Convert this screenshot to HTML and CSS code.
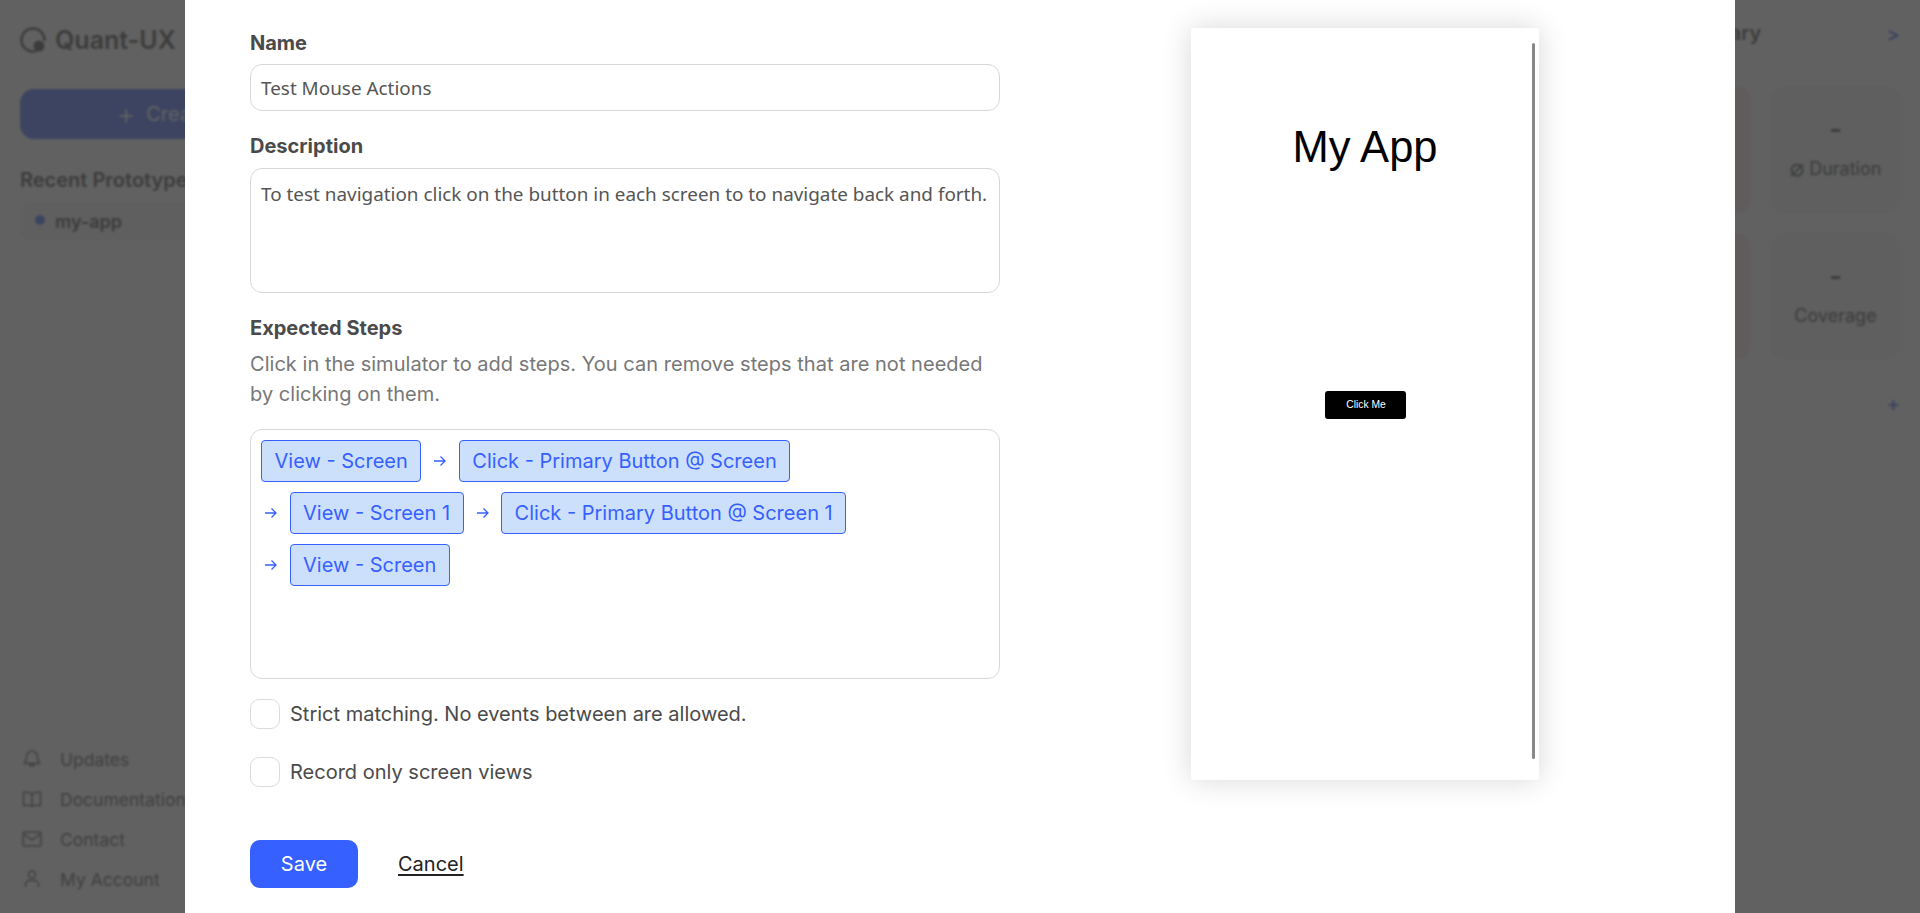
FILE: index.html
```html
<!DOCTYPE html>
<html lang="en">
<head>
<meta charset="utf-8">
<title>Quant-UX</title>
<link rel="stylesheet" href="styles.css">
</head>
<body>
<div class="page">
  <aside class="sidebar">
    <div class="logo">
      <svg class="logo-icon" viewBox="0 0 26 26"><path d="M16.500 23.900A11.500 11.500 0 1 1 24.400 14" fill="none" stroke="currentColor" stroke-width="2.500"/><circle cx="19" cy="19" r="5.500" fill="currentColor"/></svg>
      <span>Quant-UX</span>
    </div>
    <button class="create"><span class="create-plus">+</span>Create Prototype</button>
    <h3 class="recent">Recent Prototypes</h3>
    <div class="proto"><i class="proto-dot"></i>my-app</div>
    <nav class="nav">
      <a class="nav-row"><svg viewBox="0 0 20 20"><path d="M10 2a5.500 5.500 0 0 0-5.500 5.500c0 4-1.500 5.500-2 7h15c-.5-1.500-2-3-2-7A5.500 5.500 0 0 0 10 2zM7.500 14.500a2.500 2.500 0 0 0 5 0"/></svg>Updates</a>
      <a class="nav-row"><svg viewBox="0 0 20 20"><path d="M10 5.500C8.500 3.500 5 3 1.500 3.500v13c3.500-.5 7-.5 8.500 1 1.500-1.500 5-1.500 8.500-1v-13C15 3 11.500 3.500 10 5.500zM10 5.500v12"/></svg>Documentation</a>
      <a class="nav-row"><svg viewBox="0 0 20 20"><rect x="1" y="3" width="18" height="14" rx="1.500"/><path d="M2 5l8 6 8-6"/></svg>Contact</a>
      <a class="nav-row"><svg viewBox="0 0 20 20"><circle cx="10" cy="5.500" r="3.500"/><path d="M3.500 18v-2.500a4 4 0 0 1 4-4h5a4 4 0 0 1 4 4V18"/></svg>My Account</a>
    </nav>
  </aside>
  <main class="summary">
    <div class="summary-head"><h3 class="summary-title">Test Summary</h3><span class="link-mark">&gt;</span></div>
    <div class="cards">
      <div class="card card-red"><b>-</b></div>
      <div class="card"><b>-</b><span><em class="avg">⌀</em> Duration</span></div>
      <div class="card card-red"><b>-</b></div>
      <div class="card"><b>-</b><span>Coverage</span></div>
    </div>
    <div class="summary-foot"><span class="link-mark">+</span></div>
  </main>
</div>

<div class="overlay">
  <section class="modal">
    <form class="form">
      <label class="label">Name</label>
      <div class="field field-input">Test Mouse Actions</div>
      <label class="label label-desc">Description</label>
      <div class="field field-area">To test navigation click on the button in each screen to to navigate back and forth.</div>
      <label class="label label-steps">Expected Steps</label>
      <p class="help">Click in the simulator to add steps. You can remove steps that are not needed by clicking on them.</p>
      <div class="steps">
        <span class="step"><span class="chip">View - Screen</span></span>
        <span class="step">
          <svg class="arrow" viewBox="0 0 14 14"><path d="M1 7h11M7.500 2.500L12 7l-4.500 4.500"/></svg>
          <span class="chip">Click - Primary Button @ Screen</span>
        </span>
        <span class="step">
          <svg class="arrow" viewBox="0 0 14 14"><path d="M1 7h11M7.500 2.500L12 7l-4.500 4.500"/></svg>
          <span class="chip">View - Screen 1</span>
        </span>
        <span class="step">
          <svg class="arrow" viewBox="0 0 14 14"><path d="M1 7h11M7.500 2.500L12 7l-4.500 4.500"/></svg>
          <span class="chip">Click - Primary Button @ Screen 1</span>
        </span>
        <span class="step">
          <svg class="arrow" viewBox="0 0 14 14"><path d="M1 7h11M7.500 2.500L12 7l-4.500 4.500"/></svg>
          <span class="chip">View - Screen</span>
        </span>
      </div>
      <div class="check"><i class="box"></i>Strict matching. No events between are allowed.</div>
      <div class="check"><i class="box"></i>Record only screen views</div>
      <div class="actions">
        <button type="button" class="save">Save</button>
        <a class="cancel">Cancel</a>
      </div>
    </form>
    <div class="phone">
      <h1 class="app-title">My App</h1>
      <div class="app-btn">Click Me</div>
      <i class="scrollbar"></i>
    </div>
  </section>
</div>
</body>
</html>
```
FILE: styles.css
```css
* { box-sizing: border-box; }
html, body { margin: 0; height: 100%; overflow: hidden; }
body { font-family: Inter, "Liberation Sans", sans-serif; color: #333; background: #fff; }

.page { display: flex; justify-content: space-between; height: 913px; }

.sidebar { width: 404px; padding: 26px 0 14px 20px; display: flex; flex-direction: column; }
.logo { display: flex; align-items: center; gap: 9px; font-size: 25px; font-weight: 600; line-height: 26px; }
.logo-icon { width: 26px; height: 26px; margin-top: 1px; }
.create { margin-top: 36px; height: 50px; border: 0; border-radius: 14px; background: #3660ff; color: #fff; font: 400 20px Inter, sans-serif; display: flex; align-items: center; justify-content: center; }
.create-plus { font-size: 28px; font-weight: 300; margin-right: 11px; line-height: 1; }
.recent { margin: 29px 0 0; font-size: 20px; font-weight: 600; line-height: 24px; }
.proto { margin-top: 9px; height: 40px; padding-left: 15px; background: #eef2ee; border-radius: 12px; display: flex; align-items: center; gap: 10px; font-size: 18px; font-weight: 600; }
.proto-dot { width: 10px; height: 10px; border-radius: 50%; background: #3660ff; margin-top: -2px; }
.nav { margin-top: auto; display: flex; flex-direction: column; }
.nav-row { height: 40px; display: flex; align-items: center; gap: 18px; padding-left: 2px; font-size: 17.500px; color: #444; }
.nav-row svg { width: 20px; height: 20px; fill: none; stroke: currentColor; stroke-width: 1.500; flex: none; }

.summary { width: 278px; margin-right: 20px; }
.summary-head { height: 86px; padding-top: 20px; display: flex; justify-content: space-between; }
.summary-title { margin: 0; font-size: 20px; font-weight: 600; line-height: 26px; white-space: nowrap; }
.link-mark { color: #3660ff; font-size: 20px; font-weight: 600; line-height: 30px; margin-top: -1px; }
.cards { display: grid; grid-template-columns: 129px 129px; gap: 20px; grid-auto-rows: 127px; }
.card { background: #ebf0ec; border-radius: 14px; display: flex; flex-direction: column; align-items: center; padding-top: 27px; }
.card b { font-size: 26px; font-weight: 700; line-height: 32px; }
.card span { font-size: 18px; margin-top: 11px; line-height: 26px; white-space: nowrap; }
.avg { font-family: "DejaVu Sans", sans-serif; font-style: normal; font-size: 24px; font-weight: 400; line-height: 0; vertical-align: -1px; }
.card-red { background: #f8e2e2; }
.summary-foot { margin-top: 30px; display: flex; justify-content: flex-end; }

.overlay { position: fixed; inset: 0; background: rgba(62, 62, 62, .82); backdrop-filter: blur(1px); }
.modal { position: absolute; top: 0; bottom: 0; left: 185px; width: 1550px; background: #fff; padding: 31px 0 0 65px; display: flex; align-items: flex-start; overflow: hidden; color: #4a4a4a; }

.form { width: 750px; flex: none; }
.label { display: block; font-size: 20px; font-weight: 700; line-height: 24px; }
.label-desc { margin-top: 23px; }
.label-steps { margin-top: 23px; }
.field { margin-top: 9px; border: 1px solid #d8d8d8; border-radius: 12px; padding: 0 10px; font-family: "Noto Sans", sans-serif; font-size: 18.900px; color: #555; }
.label-desc + .field { margin-top: 10px; }
.field-input { height: 47px; line-height: 46px; }
.field-area { height: 125px; padding-top: 12px; line-height: 26px; white-space: nowrap; }
.help { margin: 9px 0 0; font-size: 20px; line-height: 30px; color: #777; letter-spacing: .03px; }
.steps { margin-top: 20px; height: 250px; border: 1px solid #d8d8d8; border-radius: 12px; padding: 10px 0 10px 10px; display: flex; flex-wrap: wrap; align-items: flex-start; align-content: flex-start; row-gap: 10px; }
.step { display: flex; align-items: center; margin-right: 9px; }
.chip { height: 42px; line-height: 40px; padding: 0 12.500px; border: 1px solid #3660ff; border-radius: 4px; background: #cce0fb; color: #3660ff; font-size: 20px; white-space: nowrap; }
.arrow { width: 14px; height: 14px; margin: 0 11.500px 0 3px; fill: none; stroke: #3660ff; stroke-width: 1.300; flex: none; }
.check { margin-top: 28px; height: 30px; display: flex; align-items: center; gap: 10px; font-size: 20px; }
.steps + .check { margin-top: 20px; }
.box { width: 30px; height: 30px; border: 1px solid #dcdcdc; border-radius: 9px; background: #fff; }
.actions { margin-top: 53px; display: flex; align-items: center; gap: 40px; }
.save { width: 108px; height: 48px; border: 0; border-radius: 10px; background: #3660ff; color: #fff; font: 400 20px Inter, sans-serif; }
.cancel { font-size: 20px; color: #222; text-decoration: underline; text-underline-offset: 3px; }

.phone { position: relative; flex: none; width: 348px; height: 752px; margin: -3px 0 0 191px; background: #fff; border-radius: 3px; box-shadow: 0 0 30px rgba(0, 0, 0, .16); display: flex; flex-direction: column; align-items: center; font-family: "Liberation Sans", Arial, sans-serif; color: #000; }
.app-title { margin: 94px 0 0; font-size: 43.500px; font-weight: 400; line-height: 50px; }
.app-btn { margin-top: 219px; width: 81px; height: 28px; padding-left: 2px; border-radius: 3px; background: #000; color: #fff; font-size: 10.300px; line-height: 28px; text-align: center; }
.scrollbar { position: absolute; top: 15px; bottom: 21px; right: 4px; width: 3px; background: #888; border-radius: 2px; }
```
